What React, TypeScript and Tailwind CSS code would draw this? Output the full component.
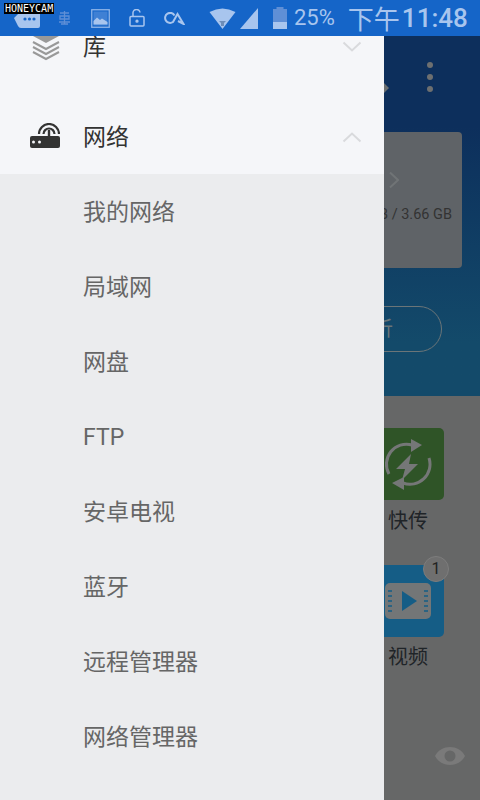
import React from "react";

const items = ["我的网络", "局域网", "网盘", "FTP", "安卓电视", "蓝牙", "远程管理器", "网络管理器"];

function StatusBar() {
  return (
    <div className="relative z-10 h-[36px] shrink-0 bg-[#1565c8] flex items-center text-[#a8c5ee] font-['Roboto','Noto_Sans_CJK_SC',sans-serif]">
      <svg width="28" height="20" viewBox="0 0 28 20" className="ml-[13px] shrink-0 mt-[1px]">
        <path d="M1 9 L6 4 Q6 1 9 1 H25 Q27 1 27 3 V17 Q27 19 25 19 H8 Q6 19 5 17 Z" fill="#a8c5ee" />
        <circle cx="12" cy="10" r="1.6" fill="#1565c8" /><circle cx="16.5" cy="10" r="1.6" fill="#1565c8" /><circle cx="21" cy="10" r="1.6" fill="#1565c8" />
      </svg>
      <svg width="13" height="14" viewBox="0 0 13 14" className="ml-[17px] shrink-0" fill="none" stroke="#5f8fd6" strokeWidth="1.3">
        <path d="M2 2 H11 M2 5 H11 V8 H2 Z M6.5 0 V13 M1 11 H12 M3 13 H10" />
      </svg>
      <svg width="19" height="19" viewBox="0 0 19 19" className="ml-[20px] shrink-0" fill="none">
        <rect x="0.75" y="0.75" width="17.5" height="17.5" stroke="#8fb5e8" strokeWidth="1.3" />
        <rect x="2.5" y="2.5" width="14" height="14" fill="#3f80d4" />
        <path d="M2.5 15.5 V12 L6 8.5 L9 11 L11 9.5 L16.5 13 V15.5 Z" fill="#a8c5ee" />
      </svg>
      <svg width="16" height="18" viewBox="0 0 16 18" className="ml-[19px] shrink-0" fill="none" stroke="#a8c5ee" strokeWidth="1.5">
        <rect x="1" y="7.5" width="14" height="9.5" rx="1" />
        <path d="M4 7.5 V4.5 A3.5 3.5 0 0 1 11 3.5" />
        <circle cx="8" cy="12.2" r="0.9" fill="#a8c5ee" />
      </svg>
      <svg width="23" height="13" viewBox="0 0 23 13" className="ml-[17px] shrink-0" fill="none" stroke="#a8c5ee" strokeWidth="2">
        <path d="M12.5 3.5 A5 5 0 1 0 11 10 L15.5 2 L21.5 12 L16 9" />
      </svg>
      <svg width="27" height="21" viewBox="0 0 27 21" className="ml-[24px] shrink-0">
        <path d="M0.5 4 Q13.5 -3 26.5 4 L13.5 21 Z" fill="#a8c5ee" />
        <path d="M10 13 H17 L15 15 V18 H12 V15 Z" fill="#6d8db8" />
      </svg>
      <svg width="18" height="21" viewBox="0 0 18 21" className="ml-[4px] shrink-0">
        <path d="M18 0 V21 H0 Z" fill="#a8c5ee" />
      </svg>
      <svg width="14" height="22" viewBox="0 0 14 22" className="ml-[15px] shrink-0">
        <rect x="3.5" y="0" width="7" height="2" fill="#5f8fd6" />
        <rect x="0" y="2" width="14" height="13" fill="#5f8fd6" />
        <rect x="0" y="15" width="14" height="7" fill="#a8c5ee" />
      </svg>
      <span className="ml-[7px] text-[22px] leading-none">25%</span>
      <span className="ml-[13px] text-[26px] leading-none whitespace-nowrap font-['Noto_Sans_CJK_SC',sans-serif]">下午</span>
      <span className="ml-[2px] text-[26px] leading-none font-medium">11:48</span>
      <span className="absolute left-[4px] top-[3px] bg-black text-white text-[10px] leading-[11px] px-[1px] font-['DejaVu_Sans_Mono',monospace]">HONEYCAM</span>
    </div>
  );
}

function Drawer() {
  return (
    <div className="w-[384px] shrink-0 h-full overflow-hidden bg-[#ebecee] font-['Roboto','Noto_Sans_CJK_SC',sans-serif]">
      <div className="bg-[#f5f6f9]">
        <div className="h-[64px] flex items-start overflow-hidden">
          <svg width="28" height="28" viewBox="0 0 28 28" className="ml-[32px] -mt-[3px] shrink-0" fill="none">
            <path d="M14 -4 L27 3 L14 10 L1 3 Z" fill="#999" />
            <path d="M1 9 L14 16 L27 9 M1 14 L14 21 L27 14 M1 19 L14 26 L27 19" stroke="#999" strokeWidth="2" />
          </svg>
          <span className="ml-[23px] text-[23px] leading-[24px] text-[#333]">库</span>
          <svg width="20" height="12" viewBox="0 0 20 12" className="ml-auto mr-[22px] mt-[5px] shrink-0" fill="none" stroke="#d9dadd" strokeWidth="2">
            <path d="M1.5 1.5 L10 9.5 L18.5 1.5" />
          </svg>
        </div>
        <div className="h-[74px] flex items-center">
          <svg width="30" height="25" viewBox="0 0 30 25" className="ml-[30px] mb-[3px] shrink-0" fill="none">
            <path d="M9 11 A10 10 0 0 1 29 11" stroke="#333" strokeWidth="2.2" />
            <path d="M13.5 11 A5.5 5.5 0 0 1 24.5 11" stroke="#333" strokeWidth="2.2" />
            <path d="M19 7 V14" stroke="#333" strokeWidth="2.4" />
            <rect x="0" y="13" width="30" height="12" rx="2" fill="#333" />
            <circle cx="3.5" cy="19" r="1.5" fill="#f5f6f9" /><circle cx="9.5" cy="19" r="1.5" fill="#f5f6f9" />
          </svg>
          <span className="ml-[23px] mt-[2px] text-[23px] text-[#333]">网络</span>
          <svg width="20" height="12" viewBox="0 0 20 12" className="ml-auto mr-[22px] shrink-0" fill="none" stroke="#d9dadd" strokeWidth="2">
            <path d="M1.5 10.5 L10 2.5 L18.5 10.5" />
          </svg>
        </div>
      </div>
      <div className="flex flex-col">
        {items.map((t) => (
          <div key={t} className="h-[75px] flex items-center pl-[83px] pt-[4px] text-[23px] text-[#666]">{t}</div>
        ))}
      </div>
    </div>
  );
}

function RightPanel() {
  return (
    <div className="flex-1 min-w-0 h-full overflow-hidden flex flex-col bg-[#666767] font-['Roboto','Noto_Sans_CJK_SC',sans-serif]">
      <div className="h-[360px] shrink-0 flex flex-col items-end bg-linear-to-b from-[#0d2f5c] from-25% to-[#134a6a] to-85%">
        <div className="w-full flex items-end mt-[26px]">
          <svg width="5" height="10" viewBox="0 0 5 10" className="mb-[-1px] shrink-0"><path d="M0 0 L5 5 L0 10 Z" fill="#6b6f70" /></svg>
          <div className="ml-auto mr-[47px] flex flex-col gap-[6px]">
            <span className="block size-[6px] rounded-full bg-[#6d6f70]" />
            <span className="block size-[6px] rounded-full bg-[#6d6f70]" />
            <span className="block size-[6px] rounded-full bg-[#6d6f70]" />
          </div>
        </div>
        <div className="mt-[40px] mr-[18px] w-[200px] h-[136px] shrink-0 rounded-[4px] bg-[#5f6367] flex flex-col items-end">
          <svg width="10" height="16" viewBox="0 0 10 16" className="mt-[40px] mr-[63px]" fill="none" stroke="#707476" strokeWidth="2">
            <path d="M1 0.5 L9 8 L1 15.5" />
          </svg>
          <span className="mt-[17px] mr-[10px] text-[14.5px] leading-[20px] text-[#333] whitespace-nowrap">0.8 GB / 3.66 GB</span>
        </div>
        <div className="mt-[38px] mr-[38px] w-[200px] h-[46px] shrink-0 rounded-full border-[1.5px] border-[#6b7578] flex items-center justify-end pr-[48px] text-[20px] text-[#6b7578] whitespace-nowrap">
          分析
        </div>
      </div>
      <div className="flex-1 flex flex-col items-end">
        <div className="mt-[32px] mr-[36px] w-[72px] shrink-0 flex flex-col items-center">
          <div className="size-[72px] rounded-[5px] bg-[#2f5427] flex items-center justify-center">
            <svg width="48" height="51" viewBox="0 0 48 51" className="shrink-0" fill="none">
              <path d="M5 35 A20 20 0 0 1 28 6" stroke="#757777" strokeWidth="3" />
              <path d="M27 0 L38 6 L27 13 Z" fill="#757777" />
              <path d="M45 19 A20 20 0 0 1 19 44" stroke="#757777" strokeWidth="3" />
              <path d="M20 38 L8 44 L20 51 Z" fill="#757777" />
              <path d="M27 15 L12 30 H21 L18 41 L34 25 H25 Z" fill="#757777" />
            </svg>
          </div>
          <span className="mt-[9px] text-[20px] leading-[24px] text-[#1f2428] whitespace-nowrap">快传</span>
        </div>
        <div className="relative mt-[32px] mr-[36px] w-[72px] shrink-0 flex flex-col items-center">
          <div className="size-[72px] rounded-[5px] bg-[#155d86] flex items-center justify-center">
            <svg width="46" height="36" viewBox="0 0 46 36" className="shrink-0">
              <rect x="0" y="0" width="46" height="36" rx="5" fill="#737677" />
              <path d="M17 8 L32 18 L17 28 Z" fill="#155d86" />
              <path d="M3 8 H7 M3 13 H7 M3 18 H7 M3 23 H7 M3 28 H7 M39 8 H43 M39 13 H43 M39 18 H43 M39 23 H43 M39 28 H43" stroke="#155d86" strokeWidth="1.5" />
            </svg>
          </div>
          <span className="absolute -top-[9px] left-[51px] size-[26px] rounded-full bg-[#6f6f6f] border border-[#7d7d7d] flex items-center justify-center text-[16px] text-[#222]">1</span>
          <span className="mt-[8px] text-[20px] leading-[24px] text-[#1f2428] whitespace-nowrap">视频</span>
        </div>
        <svg width="30" height="20" viewBox="0 0 30 20" className="mt-auto mb-[34px] mr-[15px] shrink-0">
          <path d="M0 10 C6 -2 24 -2 30 10 C24 22 6 22 0 10 Z" fill="#7a7a7a" />
          <circle cx="15" cy="10" r="5.5" fill="#666767" />
        </svg>
      </div>
    </div>
  );
}

export default function App() {
  return (
    <div className="w-[480px] h-[800px] overflow-hidden flex flex-col">
      <StatusBar />
      <div className="flex flex-1 min-h-0">
        <Drawer />
        <RightPanel />
      </div>
    </div>
  );
}
